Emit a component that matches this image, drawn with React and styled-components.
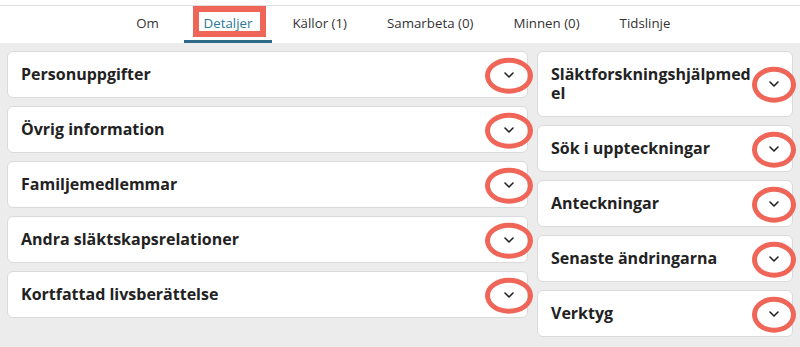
import React from 'react';
import styled, { createGlobalStyle } from 'styled-components';

const GlobalStyle = createGlobalStyle`
  html, body {
    margin: 0;
    padding: 0;
    background: #ffffff;
    font-family: "Open Sans", "Noto Sans", sans-serif;
  }
`;

const Page = styled.div`
  width: 800px;
  height: 347px;
  overflow: hidden;
  background: #ececec;
`;

const TabBar = styled.nav`
  display: flex;
  justify-content: center;
  background: #ffffff;
  padding-top: 5px;
`;

const TabRow = styled.div`
  display: flex;
  width: 100%;
  justify-content: center;
  border-top: 1px solid #dedede;
  height: 38px;
  padding-left: 2px;
  box-sizing: border-box;
`;

const Tab = styled.div`
  position: relative;
  display: flex;
  align-items: center;
  justify-content: center;
  min-width: 72px;
  padding: 0 20px;
  font-size: 13.3px;
  color: ${(p) => (p.$active ? '#2a7898' : '#333333')};
  border-bottom: 3px solid ${(p) => (p.$active ? '#2c6a87' : 'transparent')};
  box-sizing: border-box;
`;

const Highlight = styled.span`
  position: absolute;
  top: 0;
  bottom: 3px;
  left: 9px;
  right: 6px;
  border: 6px solid #ef6659;
  box-sizing: border-box;
`;

const Content = styled.main`
  display: grid;
  grid-template-columns: 521px 1fr;
  gap: 9px;
  padding: 8px 7px;
`;

const Column = styled.div`
  display: flex;
  flex-direction: column;
  gap: 8px;
`;

const Card = styled.section`
  display: flex;
  align-items: center;
  background: #ffffff;
  border: 1px solid #dadada;
  border-radius: 6px;
  padding: 13px 8px 13px 13px;
`;

const Title = styled.h3`
  flex: 1;
  min-width: 0;
  margin: 0;
  font-size: 16px;
  line-height: 19px;
  font-weight: 700;
  color: #222222;
  overflow-wrap: anywhere;
`;

const Toggle = styled.span`
  position: relative;
  display: flex;
  align-items: center;
  justify-content: center;
  width: 20px;
  height: 19px;
  margin-left: 6px;
  flex-shrink: 0;
`;

const Ring = styled.span`
  position: absolute;
  left: 50%;
  top: 50%;
  width: ${(p) => p.$w}px;
  height: 36px;
  transform: translate(-50%, -48%);
  border: 5px solid #ef6659;
  border-radius: 50%;
  box-sizing: border-box;
`;

const Chevron = () => (
  <svg width="10" height="6" viewBox="0 0 10 6" fill="none">
    <path d="M1 1l4 4 4-4" stroke="#222" strokeWidth="1.6" strokeLinecap="round" strokeLinejoin="round" />
  </svg>
);

const tabs = [
  { label: 'Om' },
  { label: 'Detaljer', active: true },
  { label: 'Källor (1)' },
  { label: 'Samarbeta (0)' },
  { label: 'Minnen (0)' },
  { label: 'Tidslinje' },
];

const leftSections = [
  'Personuppgifter',
  'Övrig information',
  'Familjemedlemmar',
  'Andra släktskapsrelationer',
  'Kortfattad livsberättelse',
];

const rightSections = [
  'Släktforskningshjälpmedel',
  'Sök i uppteckningar',
  'Anteckningar',
  'Senaste ändringarna',
  'Verktyg',
];

const Section = ({ title, ring }) => (
  <Card>
    <Title>{title}</Title>
    <Toggle>
      <Chevron />
      <Ring $w={ring} />
    </Toggle>
  </Card>
);

const App = () => (
  <Page>
    <GlobalStyle />
    <TabBar>
      <TabRow>
        {tabs.map((t) => (
          <Tab key={t.label} $active={t.active}>
            {t.label}
            {t.active && <Highlight />}
          </Tab>
        ))}
      </TabRow>
    </TabBar>
    <Content>
      <Column>
        {leftSections.map((s) => (
          <Section key={s} title={s} ring={48} />
        ))}
      </Column>
      <Column>
        {rightSections.map((s) => (
          <Section key={s} title={s} ring={44} />
        ))}
      </Column>
    </Content>
  </Page>
);

export default App;
